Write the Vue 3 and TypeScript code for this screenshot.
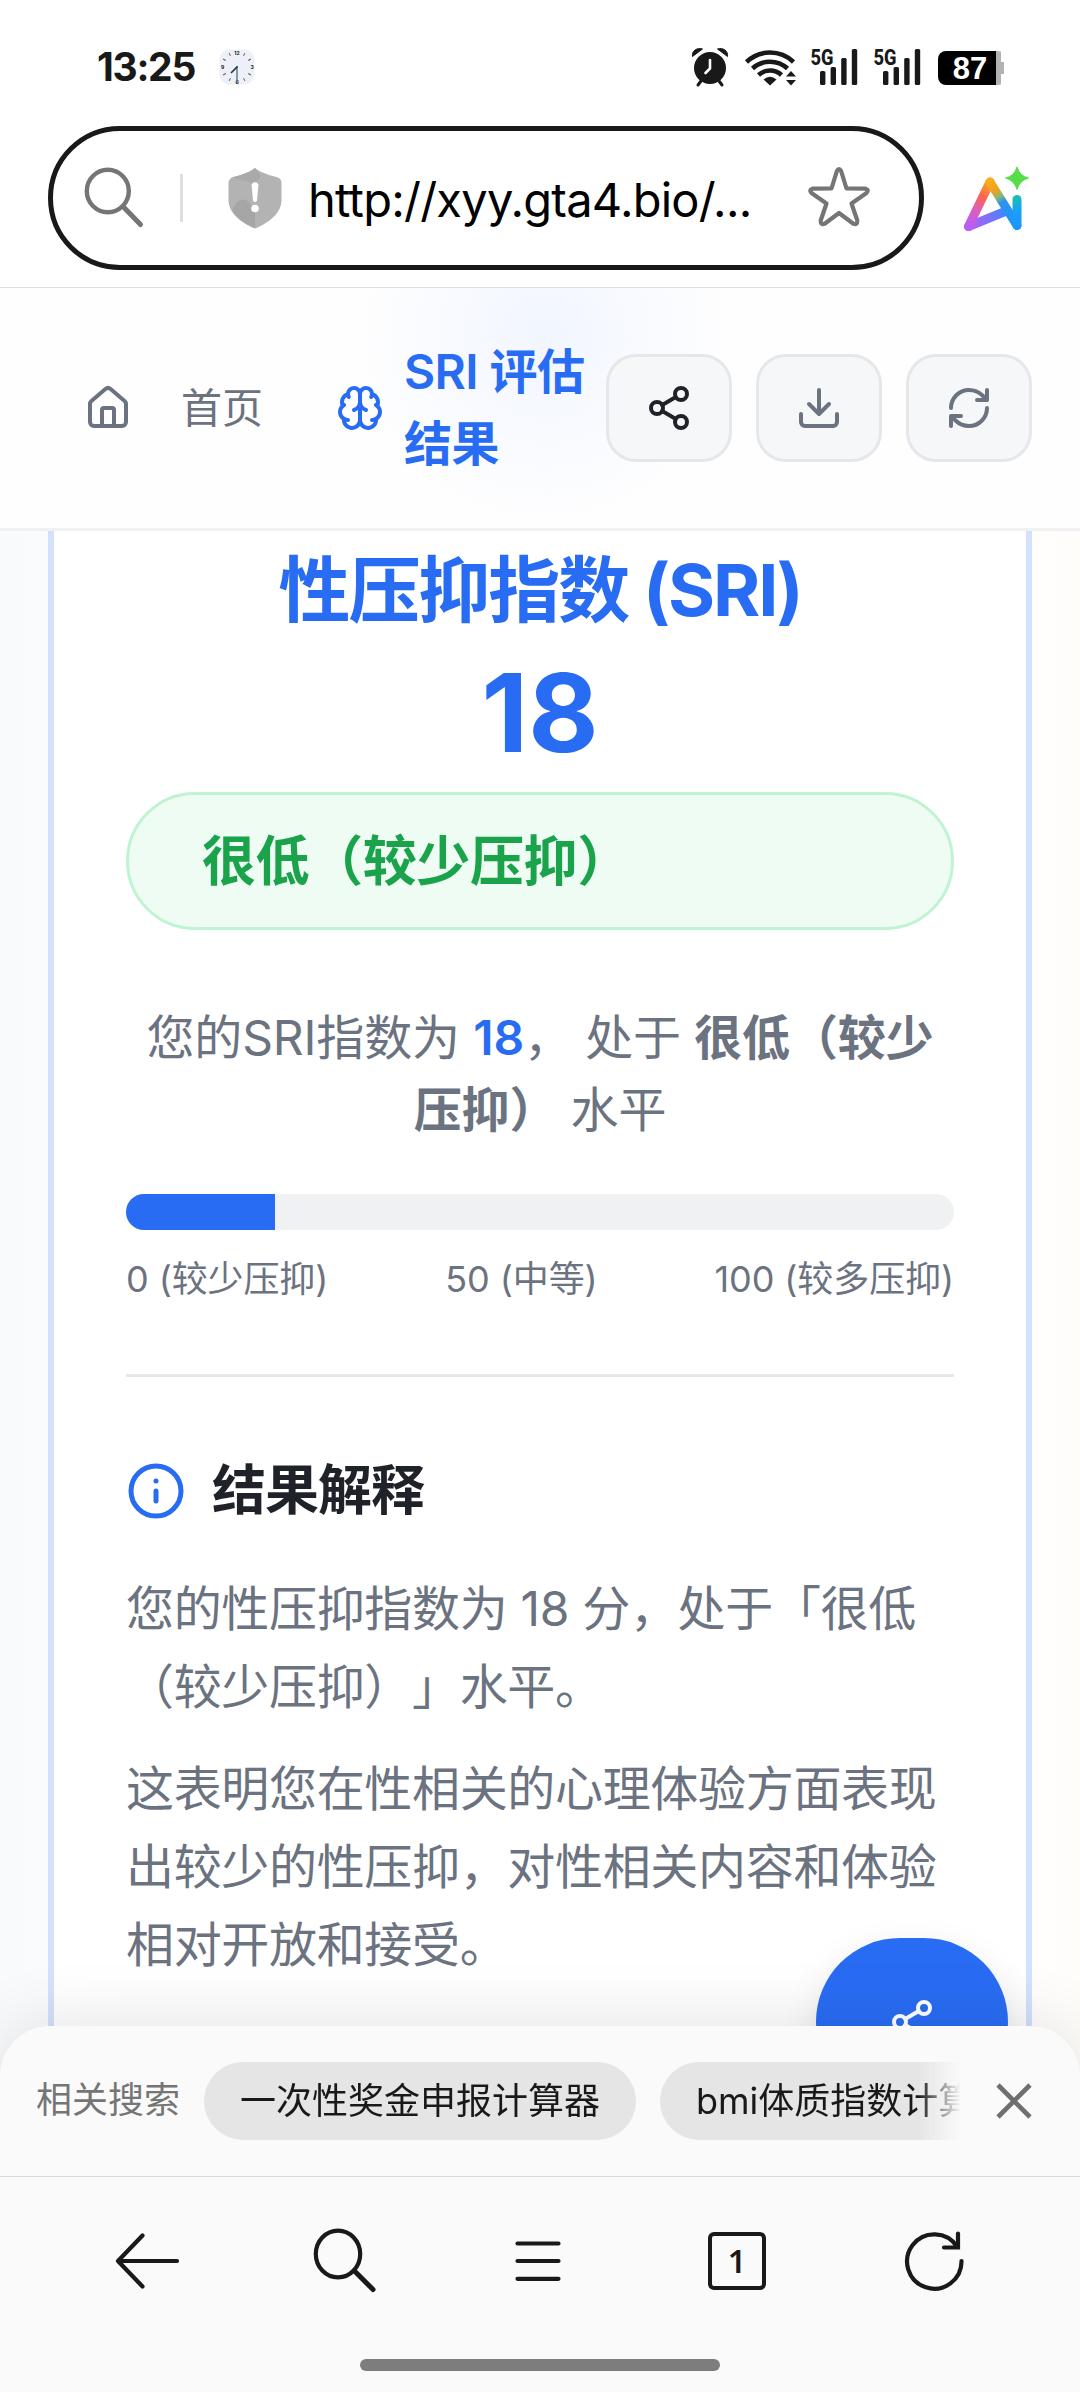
<script setup lang="ts">
import { computed, ref } from 'vue'

const score = ref(18)
const level = '很低（较少压抑）'
const fillStyle = computed(() => ({ width: `${score.value}%` }))
const scale = ['0 (较少压抑)', '50 (中等)', '100 (较多压抑)']
const suggestions = ['一次性奖金申报计算器', 'bmi体质指数计算器']
const ticks = [30, 60, 120, 150, 210, 240, 300, 330]
const bars = [
  { x: 10, y: 23 },
  { x: 20.6, y: 19 },
  { x: 31.2, y: 10 },
  { x: 41.8, y: 1 },
]
</script>

<template>
  <div class="screen">
    <header class="status">
      <div class="status-left">
        <span class="time">13:25</span>
        <svg class="clock" width="38" height="38" viewBox="0 0 38 38">
          <rect x="1.500" y="1.500" width="35" height="35" rx="10" fill="#edf1f7" />
          <g stroke="#555" stroke-width=".9">
            <line v-for="t in ticks" :key="t" x1="19" y1="3" x2="19" y2="6" :transform="`rotate(${t} 19 19)`" />
          </g>
          <g font-family="Inter, sans-serif" font-size="5" font-weight="700" fill="#111" text-anchor="middle">
            <text x="19" y="7">12</text>
            <text x="34" y="21">3</text>
            <text x="19" y="36">6</text>
            <text x="4.6" y="21">9</text>
          </g>
          <path d="M19 18.500V32.500" stroke="#8496a8" stroke-width="2" />
          <path d="M19.600 18.400L13 25" stroke="#26323e" stroke-width="1.600" />
        </svg>
      </div>
      <div class="status-right">
        <svg class="alarm" width="38" height="40" viewBox="0 0 38 40">
          <g fill="#191919">
            <circle cx="19" cy="21" r="16" />
            <path d="M1.500 9.500C.5 4 6 .2 11.500 2z" stroke="#191919" stroke-linejoin="round" />
            <path d="M36.500 9.500C37.500 4 32 .2 26.500 2z" stroke="#191919" stroke-linejoin="round" />
          </g>
          <path d="M10 34l-3 4M28 34l3 4" stroke="#191919" stroke-width="3" stroke-linecap="round" />
          <path d="M19 13v8.500l-4.500 4.500" fill="none" stroke="#fff" stroke-width="2.600" stroke-linecap="round" />
        </svg>
        <svg class="wifi" width="52" height="37" viewBox="0 0 52 37">
          <g fill="none" stroke="#191919" stroke-width="4.600">
            <path d="M1.500 13A34 34 0 0 1 48.500 13" />
            <path d="M7.500 19.500A26 26 0 0 1 42.500 19.500" />
            <path d="M13.500 26A17 17 0 0 1 36.500 26" />
          </g>
          <path d="M18.500 30.500Q25 25 31.500 30.500L25 36.500z" fill="#191919" />
          <path d="M41 27.500l5-5.500 5 5.500zM41 31h10l-5 5.500z" fill="#191919" />
        </svg>
        <svg v-for="n in 2" :key="n" class="signal" width="48" height="38" viewBox="0 0 48 38">
          <text x=".5" y="16.500" font-family="Roboto, sans-serif" font-size="22" font-weight="800" fill="#191919" textLength="23" lengthAdjust="spacingAndGlyphs">5G</text>
          <rect v-for="b in bars" :key="b.x" :x="b.x" :y="b.y" width="5.400" :height="37 - b.y" rx="1.500" fill="#191919" />
        </svg>
        <div class="battery"><span class="level">87</span></div>
      </div>
    </header>

    <div class="address-row">
      <div class="address">
        <svg class="find" width="60" height="62" viewBox="0 0 60 62">
          <g fill="none" stroke="#757575" stroke-width="4.400" stroke-linecap="round">
            <ellipse cx="23.800" cy="24" rx="21" ry="21.200" />
            <path d="M39.500 40L56.500 57.500" stroke-width="5" />
          </g>
        </svg>
        <i class="bar"></i>
        <svg class="shield" width="56" height="62" viewBox="0 0 56 62">
          <path d="M28 1C34 6 45 9 51 10.500Q54.500 12 54.500 16V33C54.500 46 42 56 28 61.500C14 56 1.500 46 1.500 33V16Q1.500 12 5 10.500C11 9 22 6 28 1z" fill="#b3b3b3" />
          <path d="M28 1C22 6 11 9 5 10.500L28 16L34 9z" fill="#a9a9a9" />
          <path d="M5 43C10 32 17 30 22 35L28 44V61C18 57 9 50 5 43z" fill="#a6a6a6" />
          <path d="M24.500 17.500Q28 12.500 31.500 17.500L30 33.500Q28 36.500 26 33.500z" fill="#fff" />
          <circle cx="28" cy="41.500" r="3.800" fill="#fff" />
        </svg>
        <span class="url">http://xyy.gta4.bio/...</span>
        <svg class="star" width="64" height="62" viewBox="0 0 64 62">
          <path d="M29.900 4Q32 0 34.100 4L39.500 21.500L58.500 21.700Q62.500 23 59.500 26L44.500 36.500L50.300 53.500Q50.500 58.500 46 56.500L32 46L18 56.500Q13.500 58.500 13.700 53.500L19.500 36.500L4.500 26Q1.500 23 5.500 21.700L24.500 21.500z" fill="none" stroke="#757575" stroke-width="4.200" stroke-linejoin="round" />
        </svg>
      </div>
      <svg class="ai" width="70" height="66" viewBox="0 0 70 66">
        <defs>
          <linearGradient id="leg" gradientUnits="userSpaceOnUse" x1="29" y1="14" x2="8" y2="60">
            <stop offset="0" stop-color="#f9ad18" />
            <stop offset=".34" stop-color="#fb6550" />
            <stop offset=".65" stop-color="#d95fc0" />
            <stop offset="1" stop-color="#b95cf8" />
          </linearGradient>
          <linearGradient id="cross" gradientUnits="userSpaceOnUse" x1="8" y1="60" x2="46" y2="44">
            <stop offset="0" stop-color="#bb5cf6" />
            <stop offset="1" stop-color="#3f86ff" />
          </linearGradient>
          <linearGradient id="stem" gradientUnits="userSpaceOnUse" x1="29" y1="14" x2="56" y2="60">
            <stop offset="0" stop-color="#f9ad18" />
            <stop offset=".22" stop-color="#e8a02c" />
            <stop offset=".33" stop-color="#8cbd6a" />
            <stop offset=".46" stop-color="#2f92ee" />
            <stop offset="1" stop-color="#1b95ff" />
          </linearGradient>
          <linearGradient id="dot" x1="0" y1="0" x2="0" y2="1">
            <stop offset="0" stop-color="#15c4ac" />
            <stop offset=".5" stop-color="#1b9dfb" />
            <stop offset="1" stop-color="#1b95ff" />
          </linearGradient>
        </defs>
        <g fill="none" stroke-width="9" stroke-linecap="round">
          <path d="M7.500 59.500L44 44.500" stroke="url(#cross)" />
          <path d="M29 15L7.500 59.500" stroke="url(#leg)" />
          <path d="M29 15L56 58.500" stroke="url(#stem)" />
        </g>
        <rect x="51.500" y="28" width="9" height="35" rx="4.500" fill="url(#dot)" />
        <path d="M56 0Q58.500 9 67.500 11Q58.500 13.500 56 22.500Q53.500 13.500 44.500 11Q53.500 9 56 0z" fill="#56de49" stroke="#56de49" stroke-width="1" stroke-linejoin="round" />
      </svg>
    </div>

    <nav class="nav">
      <div class="nav-links">
        <a class="home">
          <svg class="lucide" viewBox="0 0 24 24">
            <path d="M15 21v-8a1 1 0 0 0-1-1h-4a1 1 0 0 0-1 1v8" />
            <path d="M3 10a2 2 0 0 1 .709-1.528l7-5.999a2 2 0 0 1 2.582 0l7 5.999A2 2 0 0 1 21 10v9a2 2 0 0 1-2 2H5a2 2 0 0 1-2-2z" />
          </svg>
          <span>首页</span>
        </a>
        <div class="current">
          <svg class="lucide" viewBox="0 0 24 24">
            <path d="M12 5a3 3 0 1 0-5.997.125 4 4 0 0 0-2.526 5.770 4 4 0 0 0 .556 6.588A4 4 0 1 0 12 18Z" />
            <path d="M12 5a3 3 0 1 1 5.997.125 4 4 0 0 1 2.526 5.770 4 4 0 0 1-.556 6.588A4 4 0 1 1 12 18Z" />
            <path d="M15 13a4.500 4.500 0 0 1-3-4 4.500 4.500 0 0 1-3 4" />
            <path d="M17.599 6.500a3 3 0 0 0 .399-1.375" />
            <path d="M6.003 5.125A3 3 0 0 0 6.401 6.500" />
            <path d="M3.477 10.896a4 4 0 0 1 .585-.396" />
            <path d="M19.938 10.500a4 4 0 0 1 .585.396" />
            <path d="M6 18a4 4 0 0 1-1.967-.516" />
            <path d="M19.967 17.484A4 4 0 0 1 18 18" />
          </svg>
          <span>SRI 评估<br />结果</span>
        </div>
      </div>
      <div class="actions">
        <button class="action dark">
          <svg class="lucide" viewBox="0 0 24 24">
            <circle cx="18" cy="5" r="3" /><circle cx="6" cy="12" r="3" /><circle cx="18" cy="19" r="3" />
            <path d="M8.590 13.510l6.830 3.980M15.410 6.510l-6.820 3.980" />
          </svg>
        </button>
        <button class="action">
          <svg class="lucide" viewBox="0 0 24 24">
            <path d="M21 15v4a2 2 0 0 1-2 2H5a2 2 0 0 1-2-2v-4M7 10l5 5 5-5M12 15V3" />
          </svg>
        </button>
        <button class="action">
          <svg class="lucide" viewBox="0 0 24 24">
            <path d="M3 12a9 9 0 0 1 9-9 9.750 9.750 0 0 1 6.740 2.740L21 8M21 3v5h-5M21 12a9 9 0 0 1-9 9 9.750 9.750 0 0 1-6.740-2.740L3 16M8 16H3v5" />
          </svg>
        </button>
      </div>
    </nav>

    <main class="page">
      <section class="card">
        <h1>性压抑指数 (SRI)</h1>
        <div class="score">{{ score }}</div>
        <div class="badge">{{ level }}</div>
        <p class="summary">
          您的SRI指数为 <b class="blue">{{ score }}</b>， 处于 <b>很低（较少<br />压抑）</b> 水平
        </p>
        <div class="track"><div class="fill" :style="fillStyle"></div></div>
        <div class="scale"><span v-for="s in scale" :key="s">{{ s }}</span></div>
        <hr />
        <h2>
          <svg class="lucide info" viewBox="0 0 24 24">
            <circle cx="12" cy="12" r="10" /><path d="M12 16v-4M12 8h.01" />
          </svg>
          <span>结果解释</span>
        </h2>
        <p class="text">您的性压抑指数为 18 分，处于「很低<br />（较少压抑）」水平。</p>
        <p class="text">这表明您在性相关的心理体验方面表现<br />出较少的性压抑，对性相关内容和体验<br />相对开放和接受。</p>
      </section>
    </main>

    <button class="fab">
      <svg class="lucide" viewBox="0 0 24 24">
        <circle cx="18" cy="5" r="3" /><circle cx="6" cy="12" r="3" /><circle cx="18" cy="19" r="3" />
        <path d="M8.590 13.510l6.830 3.980M15.410 6.510l-6.820 3.980" />
      </svg>
    </button>

    <footer class="sheet">
      <div class="related">
        <span class="label">相关搜索</span>
        <div class="chips">
          <span v-for="s in suggestions" :key="s" class="chip">{{ s }}</span>
        </div>
        <svg class="close" width="36" height="36" viewBox="0 0 36 36">
          <path d="M2 2l32 32M34 2L2 34" stroke="#6f6f6f" stroke-width="4.600" />
        </svg>
      </div>
      <div class="toolbar">
        <svg width="66" height="66" viewBox="0 0 66 66">
          <path d="M29.500 7.500L5 33L29.500 58.500M5 33H64" stroke-linejoin="round" />
        </svg>
        <svg width="66" height="66" viewBox="0 0 66 66">
          <ellipse cx="28" cy="26" rx="22.200" ry="23.400" /><path d="M45 43.500L63 61.500" stroke-width="5" />
        </svg>
        <svg width="66" height="66" viewBox="0 0 66 66">
          <path d="M10.500 15.500H51.500M10.500 33H51.500M10.500 50.800H51.500" />
        </svg>
        <span class="tabs"><b>1</b></span>
        <svg width="66" height="66" viewBox="0 0 66 66">
          <path d="M60.500 33A27.200 27.200 0 1 1 56 18.500M57 5.500V19.500H43" />
        </svg>
      </div>
      <i class="grip"></i>
    </footer>
  </div>
</template>

<style>
body {
  margin: 0;
}
</style>

<style scoped>
.screen {
  --blue: #296cf4;
  --gray: #6b7280;
  position: relative;
  width: 1080px;
  height: 2392px;
  overflow: hidden;
  display: flex;
  flex-direction: column;
  background: #fff;
  font-family: Inter, 'Noto Sans CJK SC', sans-serif;
  text-spacing-trim: space-all;
}
* {
  box-sizing: border-box;
}
svg {
  display: block;
  flex: none;
  overflow: visible;
}
.lucide {
  width: 48px;
  height: 48px;
  fill: none;
  stroke: currentColor;
  stroke-width: 2;
  stroke-linecap: round;
  stroke-linejoin: round;
}
.status {
  height: 126px;
  padding: 40px 74px 0 97px;
  display: flex;
  justify-content: space-between;
}
.status-left,
.status-right {
  display: flex;
  height: 54px;
  align-items: center;
}
.time {
  width: 121px;
  font: 700 39px/54px Inter, sans-serif;
  letter-spacing: -1.300px;
  color: #191919;
}
.alarm {
  margin-right: 16px;
}
.wifi {
  margin-right: 13px;
}
.signal {
  margin-right: 15px;
}
.battery {
  width: 68px;
  height: 34px;
  margin: 2px 0 0 2px;
  border-radius: 8px;
  background:
    linear-gradient(#b3b3b3, #b3b3b3) 62px 11px / 4px 12px no-repeat,
    linear-gradient(90deg, #000 58px, #b3b3b3 58px) 0 0 / 63px 100% no-repeat;
}
.level {
  display: block;
  width: 64px;
  text-align: center;
  font: 700 31px/35px 'Liberation Sans', sans-serif;
  color: #fff;
}
.address-row {
  height: 162px;
  padding-left: 48px;
  display: flex;
  border-bottom: 1px solid #dcdddd;
}
.address {
  width: 876px;
  height: 144px;
  border: 5px solid #191919;
  border-radius: 72px;
  display: flex;
  align-items: center;
  padding-left: 31px;
}
.bar {
  width: 3px;
  height: 48px;
  margin: 0 44px 0 36px;
  background: #dedede;
}
.url {
  width: 499px;
  margin-left: 25px;
  padding-top: 3px;
  font-size: 47px;
  line-height: 60px;
  white-space: nowrap;
  letter-spacing: -0.750px;
  color: #000;
}
.ai {
  margin: 41px 0 0 37px;
}
.nav {
  height: 243px;
  padding: 48px 48px 48px 84px;
  display: flex;
  align-items: center;
  justify-content: space-between;
  border-bottom: 3px solid #f0f1f2;
  background: radial-gradient(circle 190px at 545px 50px, #f1f6fe 0, #f8faff 50%, #fefefe 100%);
}
.nav-links,
.home,
.current,
.actions {
  display: flex;
  align-items: center;
}
.home {
  gap: 49px;
  margin-right: 73px;
  font-size: 41px;
  line-height: 60px;
  color: var(--gray);
}
.current {
  gap: 20px;
  font-size: 48px;
  line-height: 72px;
  font-weight: 600;
  letter-spacing: -0.600px;
  color: var(--blue);
  white-space: nowrap;
}
.actions {
  gap: 24px;
}
.action {
  width: 126px;
  height: 108px;
  padding: 0;
  display: flex;
  align-items: center;
  justify-content: center;
  border: 3px solid #e5e7ea;
  border-radius: 30px;
  background: #f5f7f9;
  color: var(--gray);
}
.action.dark {
  color: #1f2329;
}
.page {
  flex: 1;
  padding: 0 48px;
  background: linear-gradient(90deg, #f9fafc 0, #fafbfd 48px, #fff 50%, #fffefd 1032px, #fffdfa 1080px);
}
.card {
  height: 100%;
  padding: 5px 72px 0;
  border: solid #d4e1fc;
  border-width: 0 6px;
  background: #fff;
}
h1 {
  margin: 0;
  text-align: center;
  font-size: 72px;
  line-height: 108px;
  font-weight: 700;
  letter-spacing: -2.100px;
  color: var(--blue);
}
.score {
  height: 148px;
  text-align: center;
  font-size: 108px;
  line-height: 138px;
  font-weight: 700;
  color: var(--blue);
}
.badge {
  height: 138px;
  padding: 0 73px;
  border: 3px solid #bff3d2;
  border-radius: 69px;
  background: #effcf4;
  font-size: 54px;
  line-height: 133px;
  font-weight: 600;
  letter-spacing: -0.400px;
  color: #1ba34c;
}
.summary {
  height: 192px;
  margin: 72px 0 0;
  text-align: center;
  white-space: nowrap;
  font-size: 48px;
  line-height: 72px;
  letter-spacing: -0.150px;
  color: var(--gray);
}
b {
  font-weight: 600;
}
.blue {
  color: var(--blue);
}
.track {
  height: 36px;
  border-radius: 18px;
  overflow: hidden;
  background: #f0f1f3;
}
.fill {
  height: 100%;
  background: var(--blue);
}
.scale {
  display: flex;
  justify-content: space-between;
  margin-top: 24px;
  font-size: 36px;
  line-height: 50px;
  height: 48px;
  letter-spacing: -0.100px;
  color: var(--gray);
}
hr {
  height: 3px;
  margin: 72px 0;
  border: 0;
  background: #e5e7ea;
}
h2 {
  height: 84px;
  margin: 0 0 36px;
  display: flex;
  align-items: center;
  gap: 26px;
  font-size: 54px;
  line-height: 86px;
  font-weight: 600;
  letter-spacing: -1px;
  color: #1f2329;
}
.info {
  width: 60px;
  height: 60px;
  color: var(--blue);
}
.text {
  position: relative;
  top: 1px;
  margin: 0 0 24px;
  font-size: 48px;
  line-height: 78px;
  letter-spacing: -0.330px;
  color: var(--gray);
  white-space: nowrap;
}
.fab {
  position: absolute;
  left: 816px;
  top: 1938px;
  width: 192px;
  height: 168px;
  padding: 0;
  display: flex;
  align-items: center;
  justify-content: center;
  border: 0;
  border-radius: 84px;
  background: var(--blue);
  color: #fff;
  box-shadow: 0 12px 36px rgba(0, 0, 0, 0.1);
}
.sheet {
  position: absolute;
  left: 0;
  bottom: 0;
  width: 1080px;
  height: 366px;
  border-radius: 50px 50px 0 0;
  background: #fafafa;
  box-shadow: 0 0 70px rgba(0, 0, 0, 0.12);
}
.related {
  height: 151px;
  padding-left: 36px;
  display: flex;
  align-items: center;
  border-bottom: 1px solid #d9d9d9;
  font-size: 36px;
}
.label {
  width: 168px;
  line-height: 78px;
  height: 80px;
  color: #757575;
  white-space: nowrap;
}
.chips {
  width: 757px;
  display: flex;
  gap: 24px;
  overflow: hidden;
  mask-image: linear-gradient(90deg, #000 714px, transparent 757px);
}
.chip {
  flex: none;
  height: 78px;
  padding: 0 36px;
  border-radius: 39px;
  background: #e5e5e5;
  line-height: 78px;
  white-space: nowrap;
  color: #191919;
}
.close {
  margin-left: 35px;
}
.toolbar {
  height: 168px;
  padding: 0 113px;
  display: flex;
  align-items: center;
  justify-content: space-between;
}
.toolbar svg {
  fill: none;
  stroke: #191919;
  stroke-width: 4.200;
  stroke-linecap: round;
}
.tabs {
  width: 58px;
  height: 58px;
  margin: 0 4px;
  border: 4px solid #191919;
  border-radius: 6px;
  text-align: center;
  font: 32px/50px 'Noto Sans', sans-serif;
  color: #191919;
}
.grip {
  display: block;
  width: 360px;
  height: 12px;
  margin: 14px auto 0;
  border-radius: 6px;
  background: #7d7d7d;
}
</style>
